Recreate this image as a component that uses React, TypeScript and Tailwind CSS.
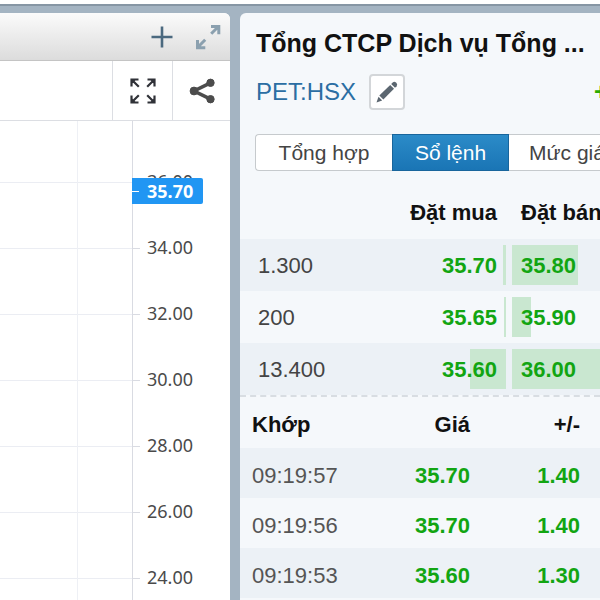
import React from "react";

const prices = ["36.00", "34.00", "32.00", "30.00", "28.00", "26.00", "24.00"];

const orders = [
    { volume: "1.300", buy: "35.70", buyBar: 3, sell: "35.80", sellBar: 75 },
    { volume: "200", buy: "35.65", buyBar: 2, sell: "35.90", sellBar: 22 },
    { volume: "13.400", buy: "35.60", buyBar: 31, sell: "36.00", sellBar: 100 },
];

const matches = [
    { time: "09:19:57", price: "35.70", change: "1.40" },
    { time: "09:19:56", price: "35.70", change: "1.40" },
    { time: "09:19:53", price: "35.60", change: "1.30" },
];

const ChartPanel = () => (
    <section className="flex min-w-0 flex-col overflow-hidden rounded-tr-md bg-white">
        {/* Title bar */}
        <header className="flex h-12 shrink-0 items-center justify-end gap-[22px] border-b border-[#c4c4c4] bg-linear-to-b from-[#fbfbfb] to-[#dcdcdc] pr-[9px]">
            <button aria-label="Add">
                <svg className="block" width="22" height="22" viewBox="0 0 22 22" stroke="#4b697f" strokeWidth="2.6">
                    <path d="M11 0.5v21M0.5 11h21" />
                </svg>
            </button>
            <button aria-label="Maximize">
                <svg className="block" width="26" height="26" viewBox="0 0 26 26" fill="none" stroke="#8ba0af" strokeWidth="3">
                    <path d="M16 2.500h7.800v7.800M23 3l-6.800 6.800M2.500 16v7.800h7.800M3 23l7.200-7.200" />
                </svg>
            </button>
        </header>

        {/* Chart tools */}
        <div className="flex h-[60px] shrink-0 items-stretch justify-end border-b border-[#dcdee3]">
            <button aria-label="Full screen" className="flex w-[60px] items-center justify-center border-l border-[#dcdee3]">
                <svg width="26" height="26" viewBox="0 0 26 26" fill="none" stroke="#303238" strokeWidth="2.2">
                    <path d="M1.500 8.500v-7h7M1.500 1.500l7.300 7.300M17.500 1.500h7v7M24.500 1.500l-7.300 7.300M1.500 17.500v7h7M1.500 24.500l7.300-7.300M17.500 24.500h7v-7M24.500 24.500l-7.300-7.300" />
                    <path d="M1 1h5.500L1 6.500zM25 1h-5.500L25 6.500zM1 25h5.500L1 19.500zM25 25h-5.500L25 19.500z" fill="#303238" stroke="none" />
                </svg>
            </button>
            <button aria-label="Share" className="flex w-[58px] items-center justify-center border-l border-[#dcdee3]">
                <svg width="26" height="26" viewBox="0 0 26 26" fill="#4c4c4c" stroke="#4c4c4c">
                    <path d="M21.5 4.8L5 13l16.500 8.200" fill="none" strokeWidth="3.6" />
                    <circle cx="21.500" cy="4.800" r="3.700" />
                    <circle cx="5" cy="13" r="3.900" />
                    <circle cx="21.500" cy="21.200" r="3.700" />
                </svg>
            </button>
        </div>

        {/* Price scale */}
        <div className="relative flex-1 pt-7">
            <div className="absolute inset-y-0 right-[152px] w-px bg-[#eef0f5]" />
            <div className="absolute inset-y-0 right-[97px] w-px bg-[#d9dbe2]" />
            {prices.map((price) => (
                <div key={price} className="flex h-[66px] items-center">
                    <div className="h-px flex-1 bg-[#ebedf3]" />
                    <div className="h-px w-[7px] bg-[#d9dbe2]" />
                    <span className="w-[90px] shrink-0 pb-[2px] pl-[7px] font-['Noto_Sans',sans-serif] text-[18px] leading-6 text-[#4a4a4a]">
                        {price}
                    </span>
                </div>
            ))}
            <div className="absolute top-[57px] right-[27px] flex h-[26px] w-[71px] items-center gap-2 rounded-r-xs bg-[#2196f3] text-white">
                <span className="h-px w-[7px] bg-white" />
                <span className="font-['Noto_Sans',sans-serif] text-[18px] leading-6 font-bold">35.70</span>
            </div>
        </div>
    </section>
);

const Bar = ({ width, side }: { width: number; side: "left" | "right" }) => (
    <div
        className={`absolute inset-y-0 bg-[#c9e7d0] ${side === "left" ? "left-0" : "right-0"}`}
        style={{ width: `${width}%` }}
    />
);

const QuotePanel = () => (
    <section className="min-w-0 overflow-hidden rounded-tl-md bg-[#f5f8fb]">
        <h1 className="pt-[14px] pl-4 text-[25px] leading-8 font-bold whitespace-nowrap text-[#111]">
            Tổng CTCP Dịch vụ Tổng ...
        </h1>

        <div className="mt-[15px] flex items-center pl-4 whitespace-nowrap">
            <a href="#" className="text-[24px] leading-8 text-[#2b6ea3]">PET:HSX</a>
            <button
                aria-label="Edit"
                className="ml-[13px] flex size-9 shrink-0 items-center justify-center rounded-sm border-2 border-[#d3d6d9] bg-white"
            >
                <svg className="shrink-0" width="22" height="22" viewBox="0 0 22 22" fill="#5b6670">
                    <path d="M0.500 21.500L2.500 15.800L6.200 19.500Z" />
                    <path d="M3.300 14.500L14.200 4L18 7.800L7.300 18.600Z" />
                    <path d="M15.200 3L16.700 1.500Q18.400 0.200 20 1.600L20.500 2.100Q21.800 3.700 20.600 5.300L19 6.800Z" />
                </svg>
            </button>
            <span className="ml-auto -mr-2 shrink-0 text-[24px] leading-8 font-bold text-[#2cab00]">+</span>
        </div>

        {/* Tabs */}
        <div className="mt-6 ml-[15px] flex h-[37px] text-[21px] leading-8 whitespace-nowrap text-[#444]">
            <button className="w-[137px] shrink-0 rounded-l-sm border border-r-0 border-[#c6cacd] bg-white">Tổng hợp</button>
            <button className="w-[117px] shrink-0 border border-[#18659c] bg-linear-to-b from-[#2b8bc8] to-[#1a75b5] text-white">
                Sổ lệnh
            </button>
            <button className="w-[117px] shrink-0 border border-l-0 border-[#c6cacd] bg-white">Mức giá</button>
        </div>

        {/* Order book */}
        <table className="mt-4 w-full table-fixed text-[22px] leading-8 whitespace-nowrap">
            <thead>
                <tr className="h-[52px] text-[#111]">
                    <th aria-label="Volume" />
                    <th className="w-1/3 pr-[13px] text-right">Đặt mua</th>
                    <th className="w-1/4 pl-[11px] text-left">Đặt bán</th>
                </tr>
            </thead>
            <tbody>
                {orders.map((order) => (
                    <tr key={order.volume} className="h-[52px] text-[#444] odd:bg-[#ecf1f6]">
                        <td className="pt-[2px] pl-[18px]">{order.volume}</td>
                        <td className="pr-1">
                            <div className="relative pt-[5px] pr-[9px] pb-[3px] text-right font-bold text-[#12a512]">
                                <Bar width={order.buyBar} side="right" />
                                <span className="relative">{order.buy}</span>
                            </div>
                        </td>
                        <td className="pl-[2px]">
                            <div className="relative pt-[5px] pb-[3px] pl-[9px] font-bold text-[#12a512]">
                                <Bar width={order.sellBar} side="left" />
                                <span className="relative">{order.sell}</span>
                            </div>
                        </td>
                    </tr>
                ))}
            </tbody>
        </table>

        {/* Matched orders */}
        <div className="border-t-2 border-dashed border-[#d8dde2]">
            <table className="w-full text-[22px] leading-8 whitespace-nowrap">
                <thead>
                    <tr className="h-[51px] text-[#111]">
                        <th className="pt-1 pl-3 text-left">Khớp</th>
                        <th className="pt-1 pr-5 text-right">Giá</th>
                        <th className="w-[110px] pt-1 pr-5 text-right">+/-</th>
                    </tr>
                </thead>
                <tbody>
                    {matches.map((match) => (
                        <tr key={match.time} className="h-[50px] odd:bg-[#ecf1f6]">
                            <td className="pt-[6px] pl-3 text-[#555]">{match.time}</td>
                            <td className="pt-[6px] pr-5 text-right font-bold text-[#12a512]">{match.price}</td>
                            <td className="pt-[6px] pr-5 text-right font-bold text-[#12a512]">{match.change}</td>
                        </tr>
                    ))}
                </tbody>
            </table>
        </div>
    </section>
);

const App = () => {
    return (
        <div className="flex h-screen flex-col overflow-hidden bg-white pt-1 font-['Liberation_Sans',Arial,sans-serif]">
            <main className="grid flex-1 grid-cols-[23fr_36fr] gap-2.5 border-t-2 border-[#8696a4] bg-[#a4b4c2] pt-[7px]">
                <ChartPanel />
                <QuotePanel />
            </main>
        </div>
    );
};

export default App;
